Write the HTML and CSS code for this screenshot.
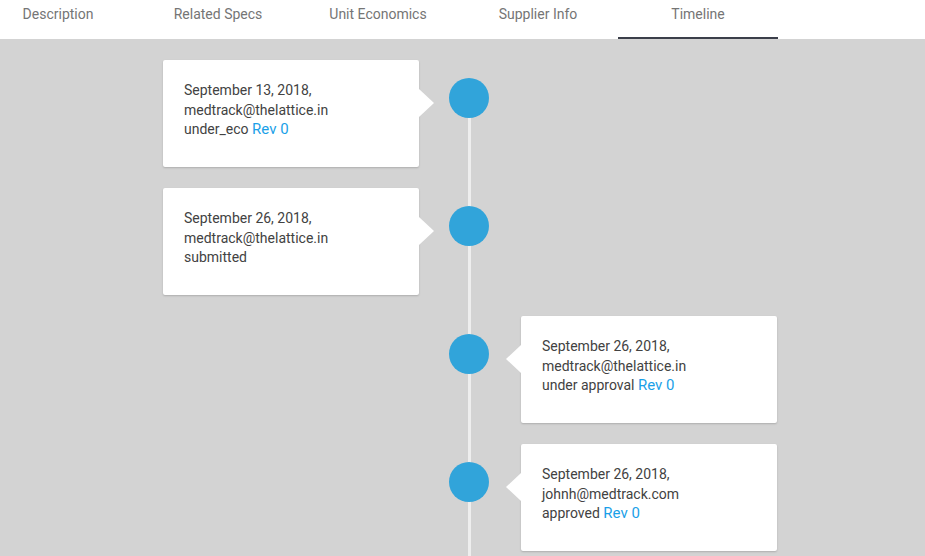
FILE: index.html
```html
<!DOCTYPE html>
<html>
<head>
<meta charset="utf-8">
<link rel="stylesheet" href="styles.css">
</head>
<body>
<div class="tabs">
  <div class="tab">Description</div>
  <div class="tab">Related Specs</div>
  <div class="tab">Unit Economics</div>
  <div class="tab">Supplier Info</div>
  <div class="tab active">Timeline</div>
</div>
<div class="content">
  <div class="timeline">
    <div class="line"></div>
    <div class="row">
      <div class="card left">September 13, 2018,<br>medtrack@thelattice.in<br>under_eco <a class="rev">Rev 0</a></div>
      <div class="dot"></div>
    </div>
    <div class="row">
      <div class="card left">September 26, 2018,<br>medtrack@thelattice.in<br>submitted</div>
      <div class="dot"></div>
    </div>
    <div class="row">
      <div class="dot"></div>
      <div class="card right">September 26, 2018,<br>medtrack@thelattice.in<br>under approval <a class="rev">Rev 0</a></div>
    </div>
    <div class="row">
      <div class="dot"></div>
      <div class="card right">September 26, 2018,<br>johnh@medtrack.com<br>approved <a class="rev">Rev 0</a></div>
    </div>
  </div>
</div>
</body>
</html>
```
FILE: styles.css
```css
html, body {
  margin: 0;
  padding: 0;
  overflow: hidden;
  height: 100%;
}
body {
  font-family: Roboto, "Liberation Sans", sans-serif;
  background: #d3d3d3;
}
.tabs {
  display: flex;
  background: #ffffff;
  height: 39px;
  margin-left: -22px;
}
.tab {
  width: 160px;
  box-sizing: border-box;
  text-align: center;
  font-size: 14px;
  line-height: 20px;
  color: #757575;
  padding-top: 4px;
  height: 39px;
}
.tab.active {
  border-bottom: 2px solid #3b3f4a;
  height: 39px;
}
.content {
  padding-top: 21px;
}
.timeline {
  position: relative;
  margin-left: 163px;
  width: 614px;
  display: grid;
  row-gap: 20px;
}
.line {
  position: absolute;
  left: 305px;
  width: 3px;
  top: 38px;
  height: 600px;
  background: #eeeeee;
}
.row {
  display: grid;
  grid-template-columns: 256px 30px 40px 32px 256px;
  height: 108px;
}
.card {
  position: relative;
  background: #ffffff;
  border-radius: 2px;
  box-shadow: 0 1px 2px rgba(0,0,0,0.18);
  box-sizing: border-box;
  height: 107px;
  padding: 21px 21px 19px;
  font-size: 14px;
  line-height: 19.5px;
  color: #424242;
}
.card.left {
  grid-column: 1;
}
.card.right {
  grid-column: 5;
}
.card.left::after {
  content: "";
  position: absolute;
  right: -15px;
  top: 29px;
  border-top: 14px solid transparent;
  border-bottom: 14px solid transparent;
  border-left: 15px solid #ffffff;
}
.card.right::after {
  content: "";
  position: absolute;
  left: -15px;
  top: 29px;
  border-top: 14px solid transparent;
  border-bottom: 14px solid transparent;
  border-right: 15px solid #ffffff;
}
.dot {
  grid-column: 3;
  grid-row: 1;
  width: 40px;
  height: 40px;
  border-radius: 50%;
  background: #31a4da;
  margin-top: 18px;
  position: relative;
  z-index: 1;
}
.rev {
  color: #1a9fe8;
  font-size: 15px;
}
```
